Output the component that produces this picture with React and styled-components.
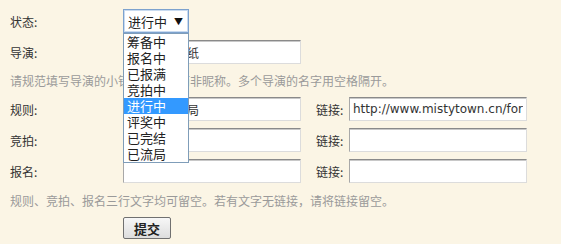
import React from 'react';
import styled, { createGlobalStyle } from 'styled-components';

const statuses = ['筹备中', '报名中', '已报满', '竞拍中', '进行中', '评奖中', '已完结', '已流局'];
const current = '进行中';

const linkRows = [
  { label: '规则:', text: '迷雾镇第一局', link: 'http://www.mistytown.cn/forum.php?mod=viewthread' },
  { label: '竞拍:', text: '', link: '' },
  { label: '报名:', text: '', link: '' },
];

export default function App() {
  return (
    <>
      <GlobalStyle />
      <Form onSubmit={(e) => e.preventDefault()}>
        <Row>
          <Label>状态:</Label>
          <SelectWrap>
            <SelectBox>
              <span>{current}</span>
              <Arrow>▼</Arrow>
            </SelectBox>
            <OptionList>
              {statuses.map((s) => (
                <Option key={s} $active={s === current}>
                  {s}
                </Option>
              ))}
            </OptionList>
          </SelectWrap>
        </Row>
        <Row>
          <Label>导演:</Label>
          <TextInput defaultValue="迷雾镇小报纸" />
        </Row>
        <Hint>请规范填写导演的小镇用户名，而非昵称。多个导演的名字用空格隔开。</Hint>
        {linkRows.map((r) => (
          <Row key={r.label}>
            <Label>{r.label}</Label>
            <TextInput defaultValue={r.text} />
            <LinkLabel>链接:</LinkLabel>
            <TextInput $url defaultValue={r.link} />
          </Row>
        ))}
        <Hint $tall>规则、竞拍、报名三行文字均可留空。若有文字无链接，请将链接留空。</Hint>
        <Row $top>
          <Label />
          <SubmitButton type="submit">提交</SubmitButton>
        </Row>
      </Form>
    </>
  );
}

const GlobalStyle = createGlobalStyle`
  html, body {
    margin: 0;
    background: #fbf5e5;
  }
  body {
    font-family: "Noto Sans CJK SC", "DejaVu Sans", sans-serif;
    font-size: 12px;
    color: #333;
  }
`;

const Form = styled.form`
  display: flex;
  flex-direction: column;
  gap: 7px;
  padding: 9px 0 0 10px;
  width: 561px;
  height: 244px;
  box-sizing: border-box;
`;

const Row = styled.div`
  display: flex;
  align-items: ${(p) => (p.$top ? 'flex-start' : 'center')};
  height: 24px;
  flex: none;
`;

const Label = styled.label`
  width: 113px;
  flex: none;
  font-size: 12px;
  color: #333;
`;

const LinkLabel = styled.label`
  width: 33px;
  margin-left: 15px;
  flex: none;
  font-size: 12px;
  color: #333;
`;

const SelectWrap = styled.div`
  position: relative;
  width: 66px;
  height: 24px;
`;

const SelectBox = styled.div`
  box-sizing: border-box;
  height: 24px;
  width: 66px;
  display: flex;
  align-items: center;
  justify-content: space-between;
  padding: 0 5px 0 4px;
  border: 1px solid #7da2ce;
  box-shadow: inset 0 0 0 1px #c9dbf0;
  background: #fff;
  font-size: 13px;
  color: #222;
`;

const Arrow = styled.span`
  font-size: 9px;
  color: #111;
`;

const OptionList = styled.ul`
  position: absolute;
  top: 24px;
  left: 0;
  width: 66px;
  box-sizing: border-box;
  margin: 0;
  padding: 0;
  list-style: none;
  background: #fff;
  border: 1px solid #7f9db9;
  z-index: 10;
`;

const Option = styled.li`
  height: 16px;
  line-height: 16px;
  padding-left: 3px;
  font-size: 13px;
  background: ${(p) => (p.$active ? '#3399ff' : '#fff')};
  color: ${(p) => (p.$active ? '#fff' : '#222')};
`;

const TextInput = styled.input`
  box-sizing: border-box;
  width: 178px;
  height: 24px;
  margin: 0;
  padding: 0 3px;
  border: 1px solid;
  border-color: #8a8a8a #dcdcdc #dcdcdc #a8a8a8;
  box-shadow: inset 0 1px 0 #c8c8c8;
  background: #fff;
  font-family: ${(p) => (p.$url ? '"DejaVu Sans", sans-serif' : '"Noto Sans CJK SC", sans-serif')};
  font-size: 12px;
  color: #333;
  outline: none;
`;

const Hint = styled.p`
  margin: 0;
  flex: none;
  height: ${(p) => (p.$tall ? '20px' : '19px')};
  display: flex;
  align-items: center;
  font-size: 12px;
  color: #9a9a9a;
`;

const SubmitButton = styled.button`
  box-sizing: border-box;
  width: 48px;
  height: 22px;
  margin: 0;
  padding: 0;
  border: 1px solid #707070;
  border-radius: 2px;
  background: linear-gradient(#f7f7f7, #dddddd);
  font-family: "Noto Sans CJK SC", sans-serif;
  font-size: 13px;
  font-weight: bold;
  color: #222;
`;
